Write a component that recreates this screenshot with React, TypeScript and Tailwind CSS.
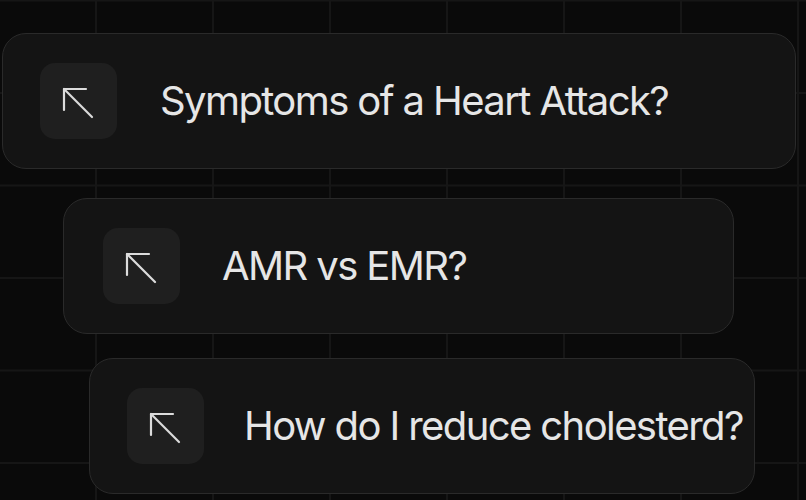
const questions = [
  { text: 'Symptoms of a Heart Attack?', wrap: 'ml-[2px] mt-[33px] w-[794px]', icon: 'ml-[37px]', gap: 'ml-[43px]' },
  { text: 'AMR vs EMR?', wrap: 'ml-[63px] mt-[29px] w-[671px]', icon: 'ml-[39px]', gap: 'ml-[42px]' },
  { text: 'How do I reduce cholesterd?', wrap: 'ml-[89px] mt-[24px] w-[666px]', icon: 'ml-[37px]', gap: 'ml-[40px]' },
];

function ArrowIcon() {
  return (
    <svg width="32" height="32" viewBox="0 0 32 32" fill="none" stroke="#dcdcdc" strokeWidth="2.2" strokeLinecap="round" strokeLinejoin="round">
      <path d="M2 23V2h22" />
      <path d="M2 2l28 28" />
    </svg>
  );
}

export default function App() {
  return (
    <div
      className="relative h-[500px] w-[806px] overflow-hidden bg-[#0a0a0a]"
      style={{
        backgroundImage:
          'linear-gradient(to right, #161616 2px, transparent 2px), linear-gradient(to bottom, #161616 2px, transparent 2px)',
        backgroundSize: '117px 92.5px',
        backgroundPosition: '-22px -0.5px',
      }}
    >
      <div className="flex flex-col items-start">
        {questions.map((q) => (
          <div
            key={q.text}
            className={`flex h-[136px] items-center rounded-[24px] border border-[#2a2a2a] bg-[#141414] ${q.wrap}`}
          >
            <div className={`h-[76px] w-[77px] shrink-0 rounded-[15px] bg-[#1f1f1f] pl-[22px] pt-[24px] ${q.icon}`}>
              <ArrowIcon />
            </div>
            <p
              className={`whitespace-nowrap text-[40px] leading-none tracking-[-1.6px] text-[#e6e6e6] ${q.gap}`}
              style={{ fontFamily: 'Inter, sans-serif' }}
            >
              {q.text}
            </p>
          </div>
        ))}
      </div>
    </div>
  );
}
